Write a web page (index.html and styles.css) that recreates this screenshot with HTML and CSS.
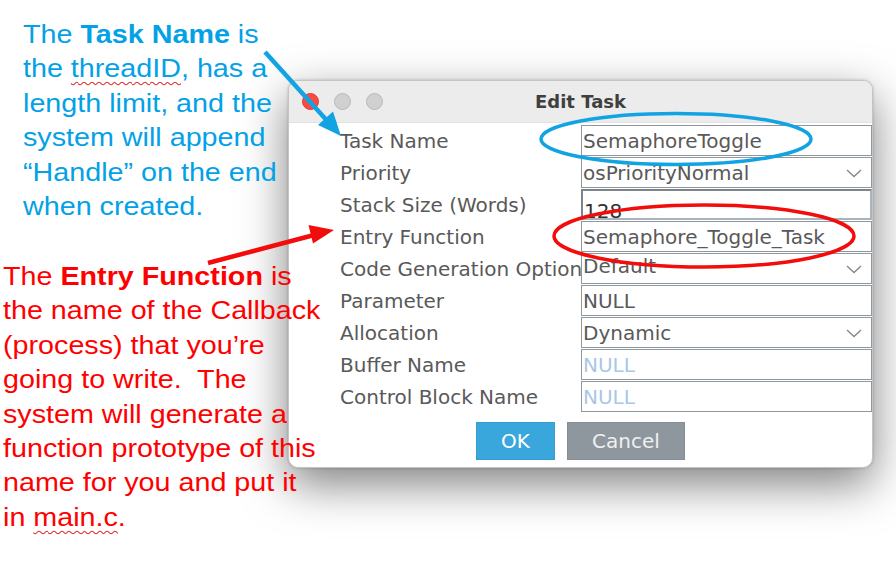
FILE: index.html
```html
<!DOCTYPE html>
<html>
<head>
<meta charset="utf-8">
<title>Edit Task</title>
<link rel="stylesheet" href="styles.css">
</head>
<body>
<div class="canvas">
  <div class="window">
    <div class="titlebar">
      <div class="lights">
        <span class="light close"></span>
        <span class="light"></span>
        <span class="light"></span>
      </div>
      <div class="title">Edit Task</div>
      <div></div>
    </div>
    <div class="body">
      <div class="form">
        <div class="label">Task Name</div>
        <div class="field">SemaphoreToggle</div>
        <div class="label">Priority</div>
        <div class="field select">osPriorityNormal<svg class="chev" width="16" height="9" viewBox="0 0 16 9"><path d="M1 1 L8 7.5 L15 1" fill="none" stroke="#858585" stroke-width="1.3"/></svg></div>
        <div class="label">Stack Size (Words)</div>
        <div class="field focus low">128</div>
        <div class="label">Entry Function</div>
        <div class="field">Semaphore_Toggle_Task</div>
        <div class="label">Code Generation Option</div>
        <div class="field select high">Default<svg class="chev" width="16" height="9" viewBox="0 0 16 9"><path d="M1 1 L8 7.5 L15 1" fill="none" stroke="#858585" stroke-width="1.3"/></svg></div>
        <div class="label">Parameter</div>
        <div class="field">NULL</div>
        <div class="label">Allocation</div>
        <div class="field select">Dynamic<svg class="chev" width="16" height="9" viewBox="0 0 16 9"><path d="M1 1 L8 7.5 L15 1" fill="none" stroke="#858585" stroke-width="1.3"/></svg></div>
        <div class="label">Buffer Name</div>
        <div class="field placeholder">NULL</div>
        <div class="label">Control Block Name</div>
        <div class="field placeholder">NULL</div>
      </div>
      <div class="buttons">
        <button class="btn ok">OK</button>
        <button class="btn cancel">Cancel</button>
      </div>
    </div>
  </div>

  <p class="note note-blue">The <b>Task Name</b> is<br>the <span class="spell">threadID</span>, has a<br>length limit, and the<br>system will append<br>“Handle” on the end<br>when created.</p>

  <p class="note note-red">The <b>Entry Function</b> is<br>the name of the Callback<br>(process) that you’re<br>going to write.&nbsp; The<br>system will generate a<br>function prototype of this<br>name for you and put it<br>in <span class="spell">main.c</span>.</p>

  <svg class="overlay" width="896" height="576" viewBox="0 0 896 576">
    <ellipse cx="676" cy="139" rx="135" ry="25.5" fill="none" stroke="#12a3e3" stroke-width="3.5"/>
    <ellipse cx="704" cy="236" rx="150" ry="31" fill="none" stroke="#f20c0c" stroke-width="3.5"/>
    <line x1="265" y1="52" x2="326" y2="119.5" stroke="#12a3e3" stroke-width="4.5"/>
    <polygon points="341,136 318,125 333,111.5" fill="#12a3e3"/>
    <line x1="208" y1="263" x2="316" y2="234.5" stroke="#f20c0c" stroke-width="4.5"/>
    <polygon points="334,230 313,243.5 308.5,225" fill="#f20c0c"/>
  </svg>
</div>
</body>
</html>
```

FILE: styles.css
```css
html, body {
  margin: 0;
  padding: 0;
  background: #ffffff;
}

.canvas {
  position: relative;
  width: 896px;
  height: 576px;
  overflow: hidden;
  background: #ffffff;
}

.window {
  position: absolute;
  left: 288px;
  top: 80px;
  width: 585px;
  height: 388px;
  box-sizing: border-box;
  background: #ffffff;
  border: 1px solid #c4c4c4;
  border-radius: 10px;
  box-shadow: 0 16px 46px rgba(0, 0, 0, 0.5), 0 0 3px rgba(0, 0, 0, 0.22);
  overflow: hidden;
  font-family: "DejaVu Sans", "Open Sans", sans-serif;
}

.titlebar {
  display: grid;
  grid-template-columns: 1fr auto 1fr;
  align-items: center;
  height: 41px;
  background: #ececec;
  border-bottom: 1px solid #e2e2e2;
}

.lights {
  display: flex;
  gap: 15px;
  padding-left: 13px;
}

.light {
  width: 17px;
  height: 17px;
  border-radius: 50%;
  box-sizing: border-box;
  background: #d0d0d0;
  border: 1px solid #b9b9b9;
}

.light.close {
  background: #fa4a42;
  border-color: #df3b33;
}

.title {
  font-weight: bold;
  font-size: 18px;
  color: #3f3f3f;
}

.body {
  padding: 2px 0 8px 51px;
  display: flex;
  flex-direction: column;
}

.form {
  display: grid;
  grid-template-columns: 241px 291px;
  grid-auto-rows: 31px;
  row-gap: 1px;
}

.label {
  display: flex;
  align-items: center;
  font-size: 20px;
  color: #595959;
  white-space: nowrap;
}

.field {
  position: relative;
  display: flex;
  align-items: center;
  box-sizing: border-box;
  height: 31px;
  padding: 1px 0 0 1px;
  border: 1.5px solid #8f979e;
  font-size: 20px;
  color: #595959;
  white-space: nowrap;
  overflow: hidden;
}

.field.focus {
  border-top-color: #7d848a;
  border-left-color: #7d848a;
  border-right-color: #a9b3bb;
  border-bottom-color: #a9b3bb;
  border-width: 2px;
  color: #333;
}

.field.low {
  padding-top: 12px;
}

.field.high {
  padding-top: 0;
  padding-bottom: 6px;
}

.field.placeholder {
  color: #a9c7e6;
}

.chev {
  position: absolute;
  right: 9px;
  top: 11px;
}

.buttons {
  display: flex;
  justify-content: center;
  gap: 12px;
  margin-top: 10px;
  margin-left: -51px;
}

.btn {
  height: 38px;
  border: 1px solid rgba(0, 0, 0, 0.06);
  border-radius: 0;
  font-family: "DejaVu Sans", "Open Sans", sans-serif;
  font-size: 20px;
  padding: 0;
}

.btn.ok {
  width: 79px;
  background: #3aa7dc;
  color: #ffffff;
}

.btn.cancel {
  width: 118px;
  background: #8e979e;
  color: #f0f0f0;
}

.note {
  position: absolute;
  margin: 0;
  font-family: "Liberation Sans", Arial, sans-serif;
  font-size: 26.5px;
  line-height: 34.4px;
  white-space: nowrap;
  transform: scaleX(1.083);
  transform-origin: left top;
}

.note-blue {
  left: 23px;
  top: 17px;
  color: #03a1e6;
}

.note-red {
  left: 3px;
  top: 259px;
  color: #ff0000;
}

.spell {
  text-decoration: underline wavy #e52a2a;
  text-decoration-thickness: 1px;
  text-underline-offset: 4px;
}

.overlay {
  position: absolute;
  left: 0;
  top: 0;
  pointer-events: none;
}
```
